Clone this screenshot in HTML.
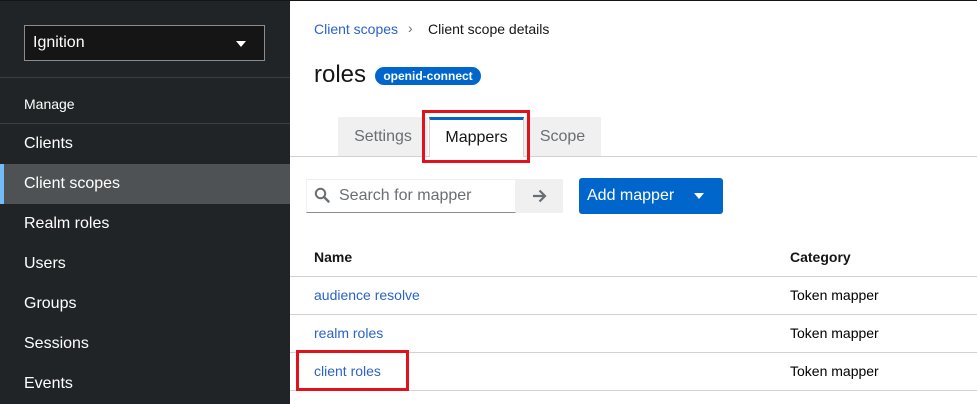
<!DOCTYPE html><html><head><style>
*{margin:0;padding:0;box-sizing:border-box}
body{width:977px;height:404px;overflow:hidden;font-family:"Liberation Sans",sans-serif;background:#fff;position:relative}
.sb{position:absolute;left:0;top:0;width:290px;height:404px;background:#212427;color:#fff}
.dd{position:absolute;left:24px;top:25px;width:241px;height:36px;background:#151515;border:1px solid #8a8d90;font-size:16px;padding:8px 8px}
.dd:after{content:"";position:absolute;right:18px;top:15px;border:5px solid transparent;border-top:6px solid #fff}
.hr{position:absolute;left:0;width:290px;height:1px;background:#3c3f42}
.it{position:absolute;left:0;width:290px;height:40px;padding-left:24px;font-size:16px;line-height:40px}
.act{background:#4f5255;border-left:4px solid #73bcf7;padding-left:20px}
.a{color:#2b62c9}
.t{position:absolute;font-size:14px}
.line{position:absolute;height:1px;background:#d2d2d2}
.red{position:absolute;border:3px solid #e2121c}
</style></head><body>
<div class="sb">
<div class="dd">Ignition</div>
<div class="hr" style="top:77px"></div>
<div class="it" style="top:84px;font-size:14px">Manage</div>
<div class="hr" style="top:123px"></div>
<div class="it" style="top:124px">Clients</div>
<div class="it act" style="top:164px">Client scopes</div>
<div class="it" style="top:204px">Realm roles</div>
<div class="it" style="top:244px">Users</div>
<div class="it" style="top:284px">Groups</div>
<div class="it" style="top:324px">Sessions</div>
<div class="it" style="top:364px">Events</div>
</div>
<div style="position:absolute;left:0;top:0;width:977px;height:1px;background:#151515"></div>
<div class="t a" style="left:314px;top:21px">Client scopes</div>
<div class="t" style="left:408px;top:20px;color:#6a6e73">›</div>
<div class="t" style="left:428px;top:21px;color:#151515">Client scope details</div>
<div class="t" style="left:314px;top:61px;font-size:24px;color:#151515">roles</div>
<div class="t" style="left:375px;top:67px;width:106px;height:18px;border-radius:9px;background:#06c;color:#fff;font-size:12px;font-weight:bold;text-align:center;line-height:18px">openid-connect</div>
<div class="line" style="left:290px;top:156px;width:687px"></div>
<div class="t" style="left:338px;top:117px;width:90px;height:39px;background:#f0f0f0;color:#6a6e73;font-size:16px;text-align:center;line-height:39px">Settings</div>
<div class="t" style="left:429px;top:117px;width:95px;height:40px;background:#fff;border-top:3px solid #06c;border-left:1px solid #d2d2d2;border-right:1px solid #d2d2d2;color:#151515;font-size:16px;text-align:center;line-height:36px">Mappers</div>
<div class="t" style="left:524px;top:117px;width:77px;height:39px;background:#f0f0f0;color:#6a6e73;font-size:16px;text-align:center;line-height:39px">Scope</div>
<div class="red" style="left:422px;top:110px;width:108px;height:53px"></div>
<div class="t" style="left:306px;top:179px;width:210px;height:34px;border:1px solid #f0f0f0;border-bottom:1px solid #8a8d90;font-size:16px;color:#6a6e73;padding:7px 0 0 32px">Search for mapper</div>
<svg style="position:absolute;left:314px;top:187px" width="16" height="16" viewBox="0 0 16 16"><circle cx="6.5" cy="6.5" r="4.7" fill="none" stroke="#6a6e73" stroke-width="2"/><path d="M10 10l4.5 4.5" stroke="#6a6e73" stroke-width="2.4" stroke-linecap="round"/></svg>
<div class="t" style="left:516px;top:179px;width:47px;height:34px;background:#f0f0f0"></div>
<svg style="position:absolute;left:532px;top:189px" width="15" height="14" viewBox="0 0 15 14"><path d="M1 7h12M7.5 1.5L13 7l-5.5 5.5" fill="none" stroke="#6a6e73" stroke-width="2.2"/></svg>
<div class="t" style="left:579px;top:178px;width:144px;height:36px;background:#06c;border-radius:3px;color:#fff;font-size:16px;padding:9px 0 0 8px">Add mapper</div>
<div style="position:absolute;left:694px;top:193px;border:5px solid transparent;border-top:6px solid #fff"></div>
<div class="t" style="left:314px;top:249px;font-weight:bold;color:#151515">Name</div>
<div class="t" style="left:790px;top:249px;font-weight:bold;color:#151515">Category</div>
<div class="line" style="left:290px;top:276px;width:687px"></div>
<div class="t a" style="left:314px;top:287px">audience resolve</div><div class="t" style="left:790px;top:287px">Token mapper</div>
<div class="line" style="left:290px;top:314px;width:687px"></div>
<div class="t a" style="left:314px;top:325px">realm roles</div><div class="t" style="left:790px;top:325px">Token mapper</div>
<div class="line" style="left:290px;top:352px;width:687px"></div>
<div class="t a" style="left:314px;top:363px">client roles</div><div class="t" style="left:790px;top:363px">Token mapper</div>
<div class="line" style="left:290px;top:390px;width:687px"></div>
<div class="red" style="left:296px;top:350px;width:113px;height:41px"></div>
</body></html>
